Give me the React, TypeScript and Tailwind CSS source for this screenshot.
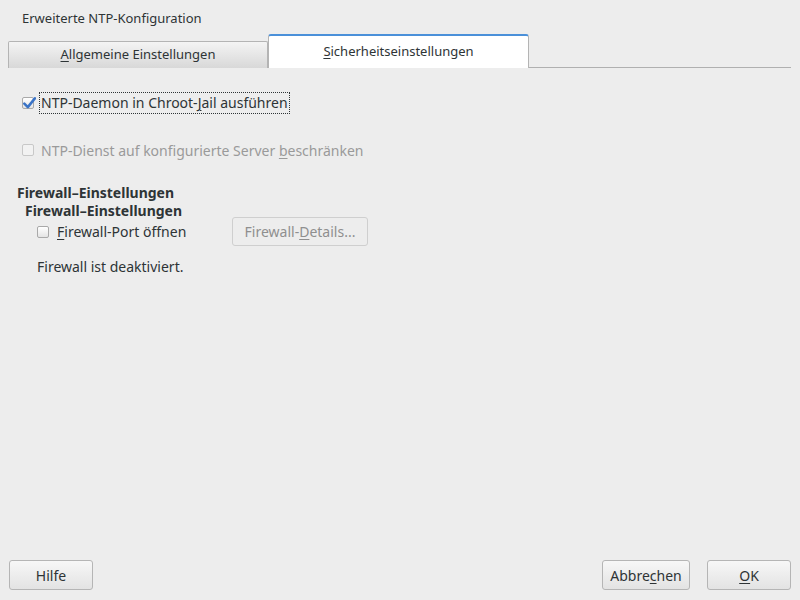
import React from "react";

const font = { fontFamily: '"Noto Sans", "Open Sans", sans-serif' };

function CheckBox({ checked, disabled }: { checked?: boolean; disabled?: boolean }) {
  return (
    <span
      className={`relative inline-flex w-[12px] h-[12px] shrink-0 rounded-[2px] border ${
        disabled ? "border-[#c8c8c8] bg-[#f2f2f2]" : "border-[#a9a9a9] bg-gradient-to-b from-[#ffffff] to-[#e4e4e4]"
      }`}
    >
      {checked && (
        <svg viewBox="0 0 12 12" className="absolute -left-[1px] -top-[2px] w-[14px] h-[14px]">
          <path d="M2 6.5 L5 9.5 L11 2" fill="none" stroke="#3a73c6" strokeWidth="2.2" strokeLinecap="round" strokeLinejoin="round" />
        </svg>
      )}
    </span>
  );
}

function Btn({ children, className = "", disabled }: { children: React.ReactNode; className?: string; disabled?: boolean }) {
  return (
    <button
      className={`h-[29px] rounded-[3px] border text-[14px] flex items-center justify-center ${
        disabled
          ? "border-[#cfcfcf] bg-[#ededed] text-[#8f8f8f]"
          : "border-[#b5b5b5] bg-gradient-to-b from-[#f7f7f7] to-[#e3e3e3] text-[#2e3436]"
      } ${className}`}
    >
      {children}
    </button>
  );
}

export default function App() {
  return (
    <div style={font} className="w-[800px] h-[600px] bg-[#ededed] flex flex-col text-[#2e3436] overflow-hidden">
      {/* Titel */}
      <div className="h-[34px] pl-[22px] pt-[8px] text-[13px] leading-[20px]">Erweiterte NTP-Konfiguration</div>

      {/* Tabs */}
      <div className="flex items-end pl-[8px] pr-[9px] h-[34px]">
        <div className="w-[260px] h-[27px] border border-b-0 border-[#b4b4b4] rounded-t-[2px] bg-gradient-to-b from-[#f4f4f4] to-[#d8d8d8] flex items-center justify-center text-[13px] border-b border-b-[#b0b0b0]">
          <span>
            <span className="underline underline-offset-2">A</span>llgemeine Einstellungen
          </span>
        </div>
        <div className="w-[261px] h-[34px] bg-white border border-b-0 border-[#b4b4b4] border-t-[2px] border-t-[#4a90d9] rounded-t-[3px] flex items-center justify-center text-[13px] pb-[1px]">
          <span>
            <span className="underline underline-offset-2">S</span>icherheitseinstellungen
          </span>
        </div>
        <div className="flex-1 border-b border-[#b0b0b0]" />
      </div>

      {/* Inhalt */}
      <div className="flex flex-col pt-[24px] text-[14px]">
        <div className="flex items-center pl-[22px] h-[22px]">
          <CheckBox checked />
          <span className="ml-[5px] px-[1px] border border-dotted border-[#2e3436] leading-[20px]">
            NTP-Daemon in Chroot-<span className="underline underline-offset-2">J</span>ail ausführen
          </span>
        </div>

        <div className="flex items-center pl-[22px] h-[22px] mt-[25px] text-[#9a9a9a]">
          <CheckBox disabled />
          <span className="ml-[7px]">
            NTP-Dienst auf konfigurierte Server <span className="underline underline-offset-2">b</span>eschränken
          </span>
        </div>

        <div className="pl-[17px] mt-[23px] font-bold text-[14px] leading-[18px]">Firewall–Einstellungen</div>
        <div className="pl-[25px] font-bold text-[14px] leading-[18px]">Firewall–Einstellungen</div>

        <div className="flex items-center pl-[37px] -mt-[3px] h-[29px]">
          <CheckBox />
          <span className="ml-[8px] w-[175px]">
            <span className="underline underline-offset-2">F</span>irewall-Port öffnen
          </span>
          <Btn disabled className="w-[136px] h-[28px]">
            <span>
              Firewall-<span className="underline underline-offset-2">D</span>etails...
            </span>
          </Btn>
        </div>

        <div className="pl-[37px] mt-[11px] leading-[20px]">Firewall ist deaktiviert.</div>
      </div>

      <div className="flex-1" />

      {/* Buttons */}
      <div className="flex items-center px-[9px] pb-[10px]">
        <Btn className="w-[84px] h-[30px]">Hilfe</Btn>
        <div className="flex-1" />
        <Btn className="w-[88px] h-[30px]">
          <span>
            Abbre<span className="underline underline-offset-2">c</span>hen
          </span>
        </Btn>
        <Btn className="w-[84px] h-[30px] ml-[17px]">
          <span>
            <span className="underline underline-offset-2">O</span>K
          </span>
        </Btn>
      </div>
    </div>
  );
}
